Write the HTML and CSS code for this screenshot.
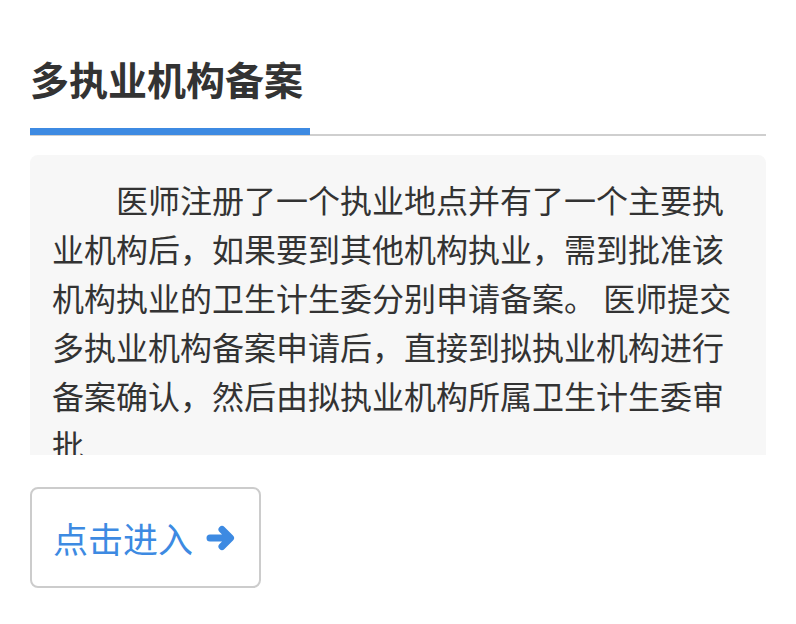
FILE: index.html
```html
<!DOCTYPE html>
<html lang="zh-CN">
<head>
  <meta charset="UTF-8">
  <meta name="viewport" content="width=device-width, initial-scale=1.0">
  <title>多执业机构备案</title>
  <link rel="stylesheet" href="styles.css">
</head>
<body>
  <div class="page">
    <h2 class="title">多执业机构备案</h2>
    <div class="tabline"><span class="tab-on"></span></div>

    <!-- 说明 -->
    <div class="intro">
      <p>医师注册了一个执业地点并有了一个主要执业机构后，如果要到其他机构执业，需到批准该机构执业的卫生计生委分别申请备案。 医师提交多执业机构备案申请后，直接到拟执业机构进行备案确认，然后由拟执业机构所属卫生计生委审批</p>
    </div>

    <a class="enter" href="#">
      <span>点击进入</span>
      <svg class="arrow" width="31" height="30" viewBox="0 0 31 30">
        <path d="M4 15h20M16 6.5l8.5 8.5-8.5 8.5" fill="none" stroke="currentColor" stroke-width="7" stroke-linecap="round" stroke-linejoin="round"/>
      </svg>
    </a>
  </div>
</body>
</html>
```

FILE: styles.css
```css
body {
  margin: 0;
  background: #fff;
  font-family: "Noto Sans CJK SC", "Noto Sans", sans-serif;
  color: #333;
}

.page {
  padding: 48px 30px 0;
}

.title {
  margin: 0;
  font-size: 39px;
  line-height: 60px;
  font-weight: bold;
  color: #333;
}

.tabline {
  margin-top: 20px;
  height: 6px;
  border-bottom: 2px solid #cfcfcf;
}

.tab-on {
  display: block;
  width: 280px;
  height: 7px;
  background-color: #3d8ae2;
}

.intro {
  margin-top: 19px;
  height: 300px;
  box-sizing: border-box;
  padding: 20px 22px 0;
  background-color: #f7f7f7;
  border-radius: 8px 8px 0 0;
  overflow: hidden;
}

.intro p {
  margin: 0;
  font-size: 32px;
  line-height: 49px;
  text-indent: 2em;
  color: #333;
}

.enter {
  margin-top: 32px;
  display: inline-flex;
  align-items: center;
  gap: 13px;
  height: 101px;
  box-sizing: border-box;
  padding: 0 22px 0 21px;
  border: 2px solid #cccccc;
  border-radius: 8px;
  font-size: 35px;
  color: #3d8ae2;
  text-decoration: none;
}

.enter .arrow {
  display: block;
}
```
